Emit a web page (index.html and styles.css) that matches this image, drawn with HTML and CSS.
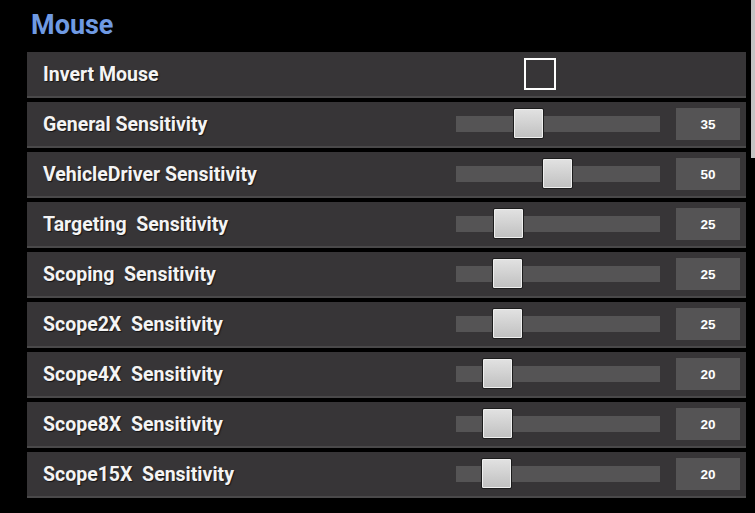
FILE: index.html
```html
<!DOCTYPE html>
<html>
<head>
<meta charset="utf-8">
<link rel="stylesheet" href="styles.css">
</head>
<body>
<div class="panel">
  <h1 class="title">Mouse</h1>
  <div class="rows">
    <div class="row">
      <span class="label">Invert Mouse</span>
      <div class="check-wrap"><div class="checkbox"></div></div>
    </div>
    <div class="row">
      <span class="label">General Sensitivity</span>
      <div class="slider"><div class="thumb" style="left:57px"></div></div>
      <div class="value">35</div>
    </div>
    <div class="row">
      <span class="label">VehicleDriver Sensitivity</span>
      <div class="slider"><div class="thumb" style="left:86px"></div></div>
      <div class="value">50</div>
    </div>
    <div class="row">
      <span class="label">Targeting  Sensitivity</span>
      <div class="slider"><div class="thumb" style="left:37px"></div></div>
      <div class="value">25</div>
    </div>
    <div class="row">
      <span class="label">Scoping  Sensitivity</span>
      <div class="slider"><div class="thumb" style="left:36px"></div></div>
      <div class="value">25</div>
    </div>
    <div class="row">
      <span class="label">Scope2X  Sensitivity</span>
      <div class="slider"><div class="thumb" style="left:36px"></div></div>
      <div class="value">25</div>
    </div>
    <div class="row">
      <span class="label">Scope4X  Sensitivity</span>
      <div class="slider"><div class="thumb" style="left:26px"></div></div>
      <div class="value">20</div>
    </div>
    <div class="row">
      <span class="label">Scope8X  Sensitivity</span>
      <div class="slider"><div class="thumb" style="left:26px"></div></div>
      <div class="value">20</div>
    </div>
    <div class="row">
      <span class="label">Scope15X  Sensitivity</span>
      <div class="slider"><div class="thumb" style="left:25px"></div></div>
      <div class="value">20</div>
    </div>
  </div>
</div>
<div class="scrollbar"></div>
</body>
</html>
```
FILE: styles.css
```css
html, body {
  margin: 0;
  padding: 0;
  background: #000;
  width: 755px;
  height: 513px;
  overflow: hidden;
}
.panel {
  padding-left: 27px;
  width: 719px;
}
.title {
  margin: 0;
  padding: 10px 0 0 4px;
  height: 52px;
  box-sizing: border-box;
  font-family: Roboto, "Noto Sans", sans-serif;
  font-weight: 700;
  font-size: 27px;
  line-height: 30px;
  color: #6f9ae3;
}
.rows {
  display: flex;
  flex-direction: column;
  gap: 4px;
}
.row {
  height: 44px;
  background: #373537;
  border-bottom: 2px solid #4a494a;
  display: flex;
  align-items: center;
  position: relative;
}
.label {
  font-family: Roboto, "Noto Sans", sans-serif;
  font-weight: 700;
  font-size: 19.5px;
  color: #f4f4f4;
  white-space: pre;
  padding-left: 16px;
  width: 413px;
  text-shadow: 1px 1px 1px rgba(0,0,0,0.6);
}
.check-wrap {
  flex: 1;
  padding-left: 68px;
}
.checkbox {
  width: 28px;
  height: 28px;
  border: 2px solid #fff;
}
.slider {
  position: relative;
  width: 204px;
  height: 16px;
  background: #555455;
}
.thumb {
  position: absolute;
  top: -8px;
  width: 29px;
  height: 29px;
  border: 1px solid #1c1c1c;
  border-radius: 2px;
  background: linear-gradient(#e2e2e2, #c0c0c0);
  box-shadow: inset 0 0 0 1px #efefef;
}
.value {
  margin-left: 16px;
  width: 64px;
  height: 32px;
  background: #555455;
  color: #fff;
  font-family: "Liberation Sans", Arial, sans-serif;
  font-weight: 700;
  font-size: 13.5px;
  display: flex;
  align-items: center;
  justify-content: center;
}
.scrollbar {
  position: absolute;
  left: 751px;
  top: 0;
  width: 4px;
  height: 158px;
  background: #c4c4c4;
}
```
